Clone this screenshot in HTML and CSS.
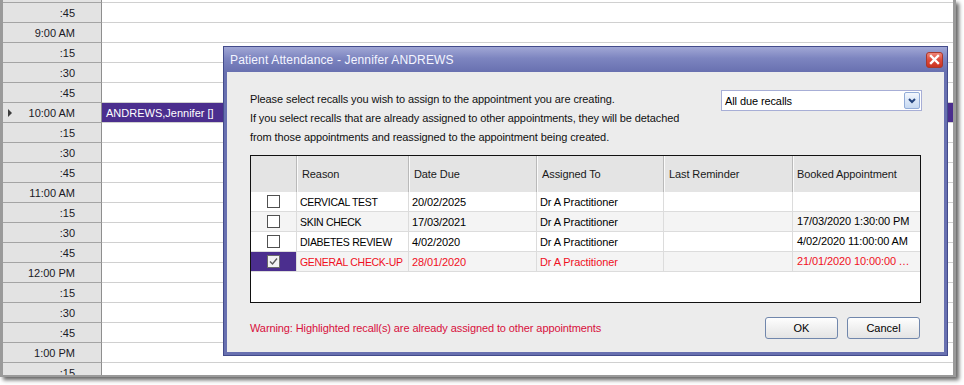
FILE: index.html
```html
<!DOCTYPE html>
<html>
<head>
<meta charset="utf-8">
<link rel="stylesheet" href="styles.css">
</head>
<body>
<div class="window">
  <div class="sched">
    <div class="srow first"><div class="tcell"></div><div class="acell"></div></div>
    <div class="srow"><div class="tcell">:45</div><div class="acell"></div></div>
    <div class="srow"><div class="tcell">9:00 AM</div><div class="acell"></div></div>
    <div class="srow"><div class="tcell">:15</div><div class="acell"></div></div>
    <div class="srow"><div class="tcell">:30</div><div class="acell"></div></div>
    <div class="srow"><div class="tcell">:45</div><div class="acell"></div></div>
    <div class="srow"><div class="tcell"><span class="ptr"></span>10:00 AM</div><div class="acell appt">ANDREWS,Jennifer []</div></div>
    <div class="srow"><div class="tcell">:15</div><div class="acell"></div></div>
    <div class="srow"><div class="tcell">:30</div><div class="acell"></div></div>
    <div class="srow"><div class="tcell">:45</div><div class="acell"></div></div>
    <div class="srow"><div class="tcell">11:00 AM</div><div class="acell"></div></div>
    <div class="srow"><div class="tcell">:15</div><div class="acell"></div></div>
    <div class="srow"><div class="tcell">:30</div><div class="acell"></div></div>
    <div class="srow"><div class="tcell">:45</div><div class="acell"></div></div>
    <div class="srow"><div class="tcell">12:00 PM</div><div class="acell"></div></div>
    <div class="srow"><div class="tcell">:15</div><div class="acell"></div></div>
    <div class="srow"><div class="tcell">:30</div><div class="acell"></div></div>
    <div class="srow"><div class="tcell">:45</div><div class="acell"></div></div>
    <div class="srow"><div class="tcell">1:00 PM</div><div class="acell"></div></div>
    <div class="srow"><div class="tcell">:15</div><div class="acell"></div></div>
  </div>
</div>

<div class="dialog">
  <div class="titlebar">
    <span class="title">Patient Attendance - Jennifer ANDREWS</span>
    <span class="close"><svg width="17" height="16" viewBox="0 0 17 16"><defs><linearGradient id="rg" x1="0" y1="0" x2="0" y2="1"><stop offset="0" stop-color="#f08a7e"/><stop offset="0.5" stop-color="#de4a3a"/><stop offset="1" stop-color="#c9301f"/></linearGradient></defs><rect x="0.5" y="0.5" width="16" height="15" rx="2.5" fill="url(#rg)" stroke="#a8382c"/><path d="M5 4 L12 11 M12 4 L5 11" stroke="#fff" stroke-width="2.4" stroke-linecap="square"/></svg></span>
  </div>
  <div class="dbody">
    <div class="top">
      <div class="intro">
        <p>Please select recalls you wish to assign to the appointment you are creating.</p>
        <p>If you select recalls that are already assigned to other appointments, they will be detached</p>
        <p>from those appointments and reassigned to the appointment being created.</p>
      </div>
      <div class="combo">
        <span>All due recalls</span>
        <span class="cbtn"><svg width="14" height="15" viewBox="0 0 14 15"><path d="M4 6 L7 9 L10 6" fill="none" stroke="#24447e" stroke-width="2"/></svg></span>
      </div>
    </div>
    <div class="tbl">
      <div class="trow hdr">
        <div class="c"></div>
        <div class="c">Reason</div>
        <div class="c">Date Due</div>
        <div class="c">Assigned To</div>
        <div class="c">Last Reminder</div>
        <div class="c">Booked Appointment</div>
      </div>
      <div class="trow">
        <div class="c chk"><span class="cb"></span></div>
        <div class="c caps">CERVICAL TEST</div>
        <div class="c">20/02/2025</div>
        <div class="c">Dr A Practitioner</div>
        <div class="c"></div>
        <div class="c"></div>
      </div>
      <div class="trow alt">
        <div class="c chk"><span class="cb"></span></div>
        <div class="c caps">SKIN CHECK</div>
        <div class="c">17/03/2021</div>
        <div class="c">Dr A Practitioner</div>
        <div class="c"></div>
        <div class="c">17/03/2020 1:30:00 PM</div>
      </div>
      <div class="trow">
        <div class="c chk"><span class="cb"></span></div>
        <div class="c caps">DIABETES REVIEW</div>
        <div class="c">4/02/2020</div>
        <div class="c">Dr A Practitioner</div>
        <div class="c"></div>
        <div class="c">4/02/2020 11:00:00 AM</div>
      </div>
      <div class="trow alt sel">
        <div class="c chk"><span class="cb on"><svg width="11" height="11" viewBox="0 0 11 11"><path d="M2 5.5 L4.5 8 L9 2.5" fill="none" stroke="#5a5a5a" stroke-width="1.4"/></svg></span></div>
        <div class="c caps">GENERAL CHECK-UP</div>
        <div class="c">28/01/2020</div>
        <div class="c">Dr A Practitioner</div>
        <div class="c"></div>
        <div class="c trunc">21/01/2020 10:00:00 AM</div>
      </div>
    </div>
    <div class="foot">
      <span class="warn">Warning: Highlighted recall(s) are already assigned to other appointments</span>
      <div class="btns">
        <button class="btn">OK</button>
        <button class="btn">Cancel</button>
      </div>
    </div>
  </div>
</div>
</body>
</html>
```

FILE: styles.css
```css
* { box-sizing: border-box; }

body {
  margin: 0;
  width: 964px;
  height: 385px;
  overflow: hidden;
  position: relative;
  background: #fff;
  font-family: "Liberation Sans", Arial, sans-serif;
  font-size: 11px;
  color: #000;
}

.window {
  width: 956px;
  height: 377px;
  border-style: solid;
  border-color: #9a9a9a;
  border-width: 0 3px 2px 3px;
  background: #fff;
  overflow: hidden;
  box-shadow: 3px 3px 4px rgba(0, 0, 0, 0.6);
}

.srow {
  display: flex;
  height: 20px;
}

.srow.first { margin-top: -17px; }

.tcell {
  width: 99px;
  flex: none;
  display: flex;
  align-items: center;
  justify-content: flex-end;
  padding: 0 26px 0 5px;
  background: #e3e3e3;
  border-bottom: 1px solid #a4a4a4;
  border-right: 1px solid #8e8e8e;
  color: #1a1a26;
}

.ptr {
  margin-right: auto;
  width: 0;
  height: 0;
  border-left: 4px solid #3c3c3c;
  border-top: 4px solid transparent;
  border-bottom: 4px solid transparent;
}

.acell {
  flex: 1;
  display: flex;
  align-items: center;
  padding-left: 4px;
  border-bottom: 1px solid #d0d0d0;
}

.appt {
  background: #4b2e8e;
  color: #fff;
}

/* dialog */
.dialog {
  position: absolute;
  left: 223px;
  top: 46px;
  width: 725px;
  height: 310px;
  border: 1px solid #434b8b;
  background: #6870b0;
  padding: 0 3px 3px 3px;
  display: flex;
  flex-direction: column;
}

.titlebar {
  height: 25px;
  flex: none;
  margin: 0 -3px;
  padding: 0 4px 0 6px;
  display: flex;
  align-items: center;
  justify-content: space-between;
  background: linear-gradient(#a1a7d5, #7d85c0 45%, #6870b0);
}

.title {
  color: #f4f5ff;
  font-size: 12px;
  letter-spacing: 0.15px;
}

.close {
  display: flex;
  width: 17px;
  height: 16px;
}

.dbody {
  flex: 1;
  background: #ececec;
  padding: 18px 22px 12px 23px;
  display: flex;
  flex-direction: column;
  letter-spacing: -0.1px;
}

.top {
  display: flex;
  justify-content: space-between;
  align-items: flex-start;
}

.intro p {
  margin: 0;
  line-height: 19px;
  color: #111;
}

.combo {
  width: 201px;
  height: 21px;
  border: 1px solid #a7aed6;
  background: #fff;
  display: flex;
  align-items: center;
  justify-content: space-between;
  padding: 0 1px 0 3px;
}

.cbtn {
  width: 16px;
  height: 17px;
  display: flex;
  align-items: center;
  justify-content: center;
  border: 1px solid #92acd8;
  border-radius: 2px;
  background: linear-gradient(#f4f8fe, #dbe7f8 50%, #c6d9f2);
}

.tbl {
  width: 671px;
  height: 148px;
  margin-top: 8px;
  border: 1px solid #111;
  background: #fff;
}

.trow {
  display: grid;
  grid-template-columns: 46px 112px 128px 127px 129px 1fr;
  height: 20px;
  border-bottom: 1px solid #dcdcdc;
}

.trow .c {
  display: flex;
  align-items: center;
  padding-left: 3px;
  border-right: 1px solid #dcdcdc;
  white-space: nowrap;
  overflow: hidden;
}

.trow .c:last-child {
  border-right: none;
  display: block;
  line-height: 19px;
  text-overflow: ellipsis;
  padding-right: 4px;
  padding-left: 4px;
}

.trow .c.trunc { padding-right: 10px; }

.trow .c.caps {
  font-size: 10.5px;
  letter-spacing: -0.3px;
}

.hdr {
  height: 36px;
  background: #e4e4e4;
  border-bottom: none;
}

.hdr .c {
  padding-left: 5px;
  border-right: 1px solid #b9b9b9;
  box-shadow: inset 1px 0 #fafafa;
  color: #1a1a1a;
}

.hdr .c:first-child { box-shadow: none; }

.hdr .c:last-child {
  line-height: 36px;
}

.alt { background: #f4f4f4; }

.chk {
  justify-content: center;
  padding-left: 0 !important;
}

.cb {
  width: 13px;
  height: 13px;
  border: 1px solid #505050;
  background: #fff;
  display: flex;
  align-items: center;
  justify-content: center;
}

.cb.on { background: #f2f2f2; border-color: #6a6a6a; }

.sel { color: #f0101e; }
.sel .chk { background: #4b2e8e; }

.foot {
  margin-top: 14px;
  display: flex;
  align-items: center;
  justify-content: space-between;
}

.warn {
  color: #d8103c;
}

.btns {
  display: flex;
  gap: 9px;
  margin-right: 2px;
}

.btn {
  width: 73px;
  height: 22px;
  padding: 0;
  font-family: inherit;
  font-size: 11px;
  color: #000;
  border: 1px solid #7187ac;
  border-radius: 3px;
  background: linear-gradient(#fefefe, #f0f0f0 50%, #e4e4e4);
}
```
